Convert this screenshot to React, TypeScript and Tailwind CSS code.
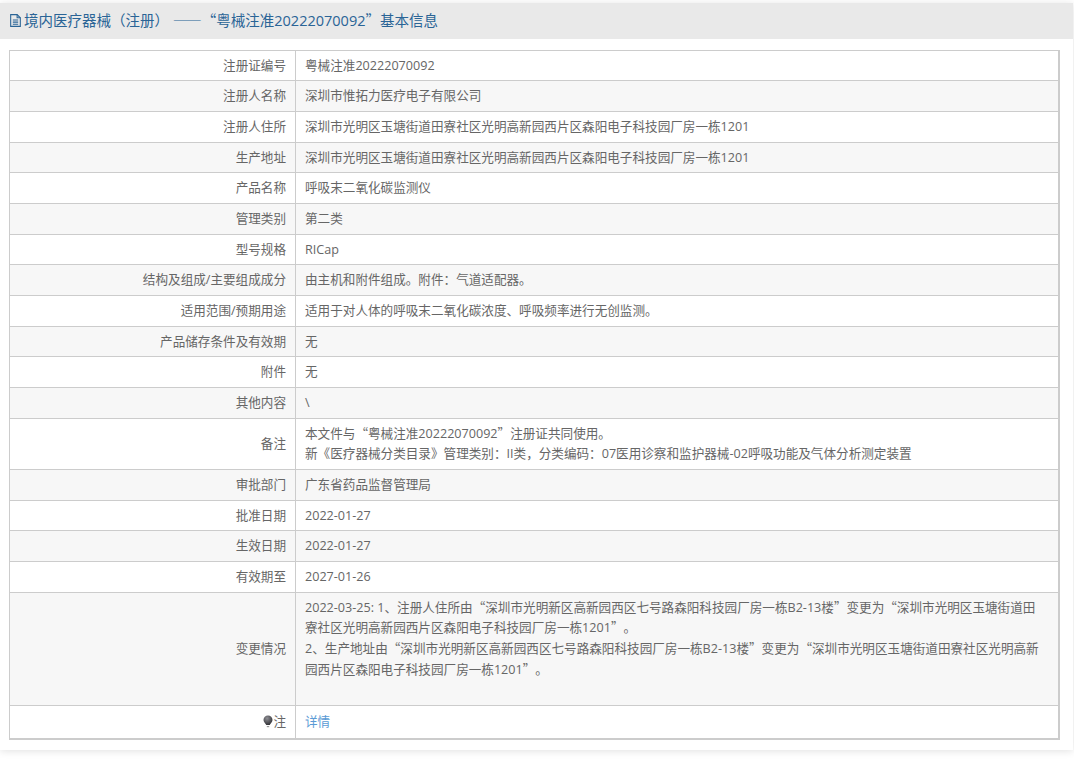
const rows: { label: string; value: string[]; extra?: boolean }[] = [
  { label: "注册证编号", value: ["粤械注准20222070092"] },
  { label: "注册人名称", value: ["深圳市惟拓力医疗电子有限公司"] },
  { label: "注册人住所", value: ["深圳市光明区玉塘街道田寮社区光明高新园西片区森阳电子科技园厂房一栋1201"] },
  { label: "生产地址", value: ["深圳市光明区玉塘街道田寮社区光明高新园西片区森阳电子科技园厂房一栋1201"] },
  { label: "产品名称", value: ["呼吸末二氧化碳监测仪"] },
  { label: "管理类别", value: ["第二类"] },
  { label: "型号规格", value: ["RICap"] },
  { label: "结构及组成/主要组成成分", value: ["由主机和附件组成。附件：气道适配器。"] },
  { label: "适用范围/预期用途", value: ["适用于对人体的呼吸末二氧化碳浓度、呼吸频率进行无创监测。"] },
  { label: "产品储存条件及有效期", value: ["无"] },
  { label: "附件", value: ["无"] },
  { label: "其他内容", value: ["\\"] },
  {
    label: "备注",
    value: [
      "本文件与“粤械注准20222070092”注册证共同使用。",
      "新《医疗器械分类目录》管理类别：II类，分类编码：07医用诊察和监护器械-02呼吸功能及气体分析测定装置",
    ],
  },
  { label: "审批部门", value: ["广东省药品监督管理局"] },
  { label: "批准日期", value: ["2022-01-27"] },
  { label: "生效日期", value: ["2022-01-27"] },
  { label: "有效期至", value: ["2027-01-26"] },
  {
    label: "变更情况",
    value: [
      "2022-03-25: 1、注册人住所由“深圳市光明新区高新园西区七号路森阳科技园厂房一栋B2-13楼”变更为“深圳市光明区玉塘街道田寮社区光明高新园西片区森阳电子科技园厂房一栋1201”。",
      "2、生产地址由“深圳市光明新区高新园西区七号路森阳科技园厂房一栋B2-13楼”变更为“深圳市光明区玉塘街道田寮社区光明高新园西片区森阳电子科技园厂房一栋1201”。",
    ],
    extra: true,
  },
];

// quotes and dashes are narrow in Open Sans, the CJK font gives them full width
function Wide({ text }: { text: string }) {
  return (
    <>
      {text.split(/([“”—]+)/).map((part, i) =>
        i % 2 === 1 ? (
          <span key={i} className="font-['Noto_Sans_CJK_SC',sans-serif] leading-none">
            {part}
          </span>
        ) : (
          part
        )
      )}
    </>
  );
}

function BulbIcon() {
  return (
    <svg viewBox="0 0 10 13" className="inline-block h-[13px] w-[10px] align-[-2px]">
      <defs>
        <radialGradient id="bulb" cx="0.4" cy="0.3" r="0.7">
          <stop offset="0" stopColor="#8f8f95" />
          <stop offset="1" stopColor="#333337" />
        </radialGradient>
      </defs>
      <path d="M5 0.500a4.500 4.500 0 0 1 4.500 4.500c0 2-1.700 3-2.800 5H3.300C2.200 8 0.500 7 0.500 5A4.500 4.500 0 0 1 5 0.500z" fill="url(#bulb)" />
      <path d="M3.800 11h2.400v1.200H3.800z" fill="#999" />
    </svg>
  );
}

export default function App() {
  return (
    <div lang="zh-CN" className="min-h-[767px] bg-white pr-px pt-[3px] font-['Open_Sans','Noto_Sans_CJK_SC',sans-serif] text-[12.6px] text-[#666] [font-kerning:none] [text-spacing-trim:space-all]">
      <div className="h-[747px] bg-white shadow-[0_1px_8px_rgba(0,0,0,0.12)]">
        <div className="flex h-9 items-center gap-px bg-[#e9e9e9] pb-px pl-2 text-[14.5px] text-[#2a6496]">
          <svg viewBox="0 0 14 14" className="h-[15px] w-[15px]" fill="none" stroke="currentColor" strokeWidth="1">
            <path d="M2.500 1.500h6l3 3v8h-9z" />
            <path d="M8.500 1.500v3h3M4.500 6.500h5M4.500 8.500h5M4.500 10.500h5" />
          </svg>
          <span>
            <Wide text="境内医疗器械（注册） ——“粤械注准20222070092”基本信息" />
          </span>
        </div>
        <div className="pl-[9px] pt-[10.700px]">
          <table className="w-[1051px] table-fixed border-collapse border-t border-r-2 border-b-2 border-l border-[#ccc] leading-[20.67px]">
            <colgroup>
              <col className="w-[286px]" />
              <col />
            </colgroup>
            <tbody>
              {rows.map((row, i) => (
                <tr key={row.label} className={i % 2 === 1 ? "bg-[#f7f7f7]" : "bg-white"}>
                  <td className="border border-[#ccc] pt-[5.100px] pr-[9px] pb-[3.900px] pl-[9px] text-right">{row.label}</td>
                  <td className="border border-[#ccc] pt-[5.100px] pr-[13px] pb-[3.900px] pl-[9px]">
                    {row.value.map((line) => (
                      <div key={line}>
                        <Wide text={line} />
                      </div>
                    ))}
                    {row.extra ? <div className="h-[20.670px]" /> : null}
                  </td>
                </tr>
              ))}
              <tr className="bg-white">
                <td className="border border-[#ccc] pt-[6.500px] pr-[9px] pb-[4.500px] pl-[9px] text-right">
                  <BulbIcon />注
                </td>
                <td className="border border-[#ccc] pt-[6.500px] pr-[9px] pb-[4.500px] pl-[9px]">
                  <a href="#" className="text-[#5b9bd5]">
                    详情
                  </a>
                </td>
              </tr>
            </tbody>
          </table>
        </div>
      </div>
    </div>
  );
}
